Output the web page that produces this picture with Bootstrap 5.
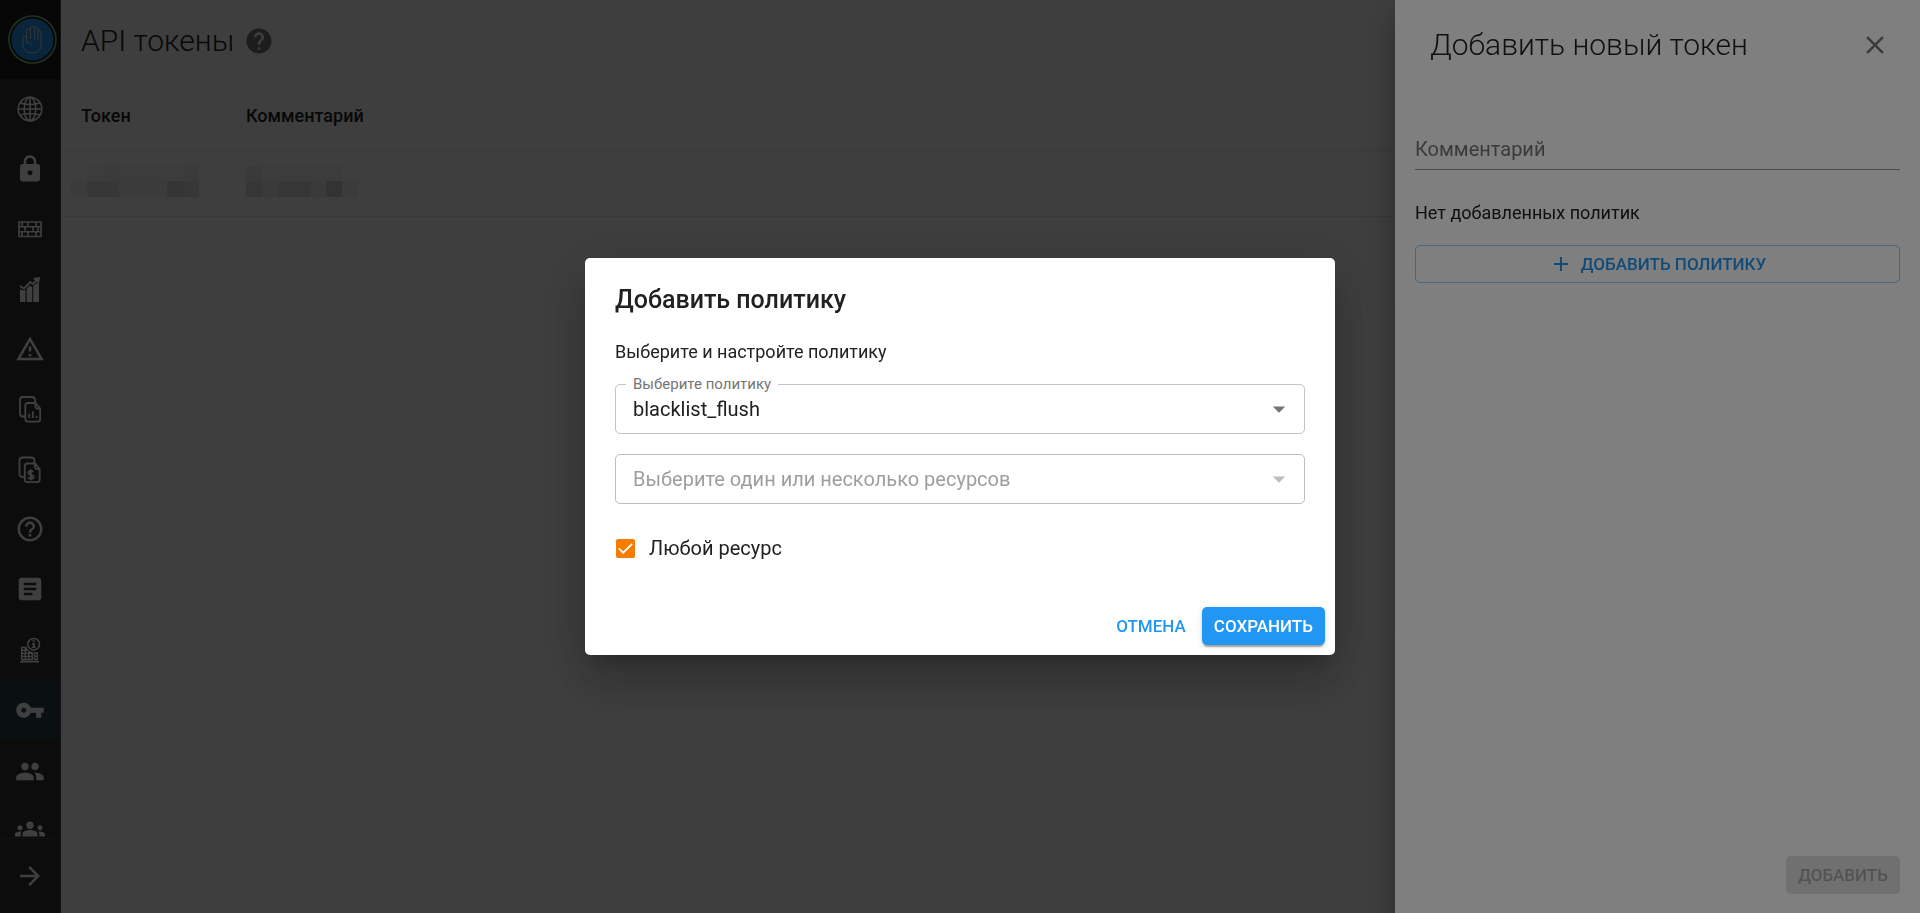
<!DOCTYPE html>
<html lang="ru">
<head>
<meta charset="utf-8">
<meta name="viewport" content="width=device-width, initial-scale=1">
<title>API токены</title>
<link href="https://cdn.jsdelivr.net/npm/bootstrap@5.3.0/dist/css/bootstrap.min.css" rel="stylesheet">
<style>
  body { font-family: Roboto, "Noto Sans", sans-serif; font-size: 18px; line-height: 26px; color: #212121; background: #fafafa; }
  svg { display: block; flex: none; }

  /* Sidebar */
  .side { width: 61px; background: #303030; border-right: 1px solid #4a4a4a; color: #fff; }
  .side-logo { height: 79px; background: #1a1a1a; padding: 15px 0 0 8px; }
  .side-scroll { min-height: 0; }
  .side-link { height: 60px; color: #fff; flex: none; }
  .side-link.active { background: #2b3f48; }
  .side-foot { height: 75px; border-top: 1px solid #4a4a4a; }
  .ic { width: 30px; height: 30px; fill: currentColor; }
  .ln { fill: none; stroke: currentColor; }

  /* Page */
  .page-head { height: 82px; padding-left: 20px; gap: 10px; }
  .title-light { font-size: 30px; line-height: 40px; font-weight: 300; margin: 0; }
  .help-btn { color: #757575; }
  .tokens { color: inherit; margin: 0; --bs-table-bg: transparent; }
  .tokens th { height: 68px; padding: 0 20px; font-weight: 500; vertical-align: middle; border-bottom: 1px solid #e0e0e0; }
  .tokens td { height: 66px; padding: 14px 20px 0; vertical-align: top; border-bottom: 1px solid #e0e0e0; }
  .tokens td:first-child { padding-left: 10px; }
  .col-token { width: 165px; }

  /* Drawer */
  .drawer.offcanvas { --bs-offcanvas-width: 525px; border: 0; background: #fff; color: #212121;
    box-shadow: 0 10px 12px -6px rgba(0,0,0,.2), 0 20px 30px 2px rgba(0,0,0,.14), 0 8px 38px 6px rgba(0,0,0,.12); }
  .drawer-head { padding: 25px 30px 0 35px; }
  .drawer-body { padding: 70px 20px 0; }
  .drawer-foot { padding: 0 20px 19px; }
  .drawer-note { margin: 30px 0 19px; }
  .line-input { font-size: 20px; line-height: 28px; padding: 0 0 6px; border: 0; border-bottom: 1px solid #949494; border-radius: 0; background: none; }
  .line-input::placeholder { color: #757575; opacity: 1; }
  .icon-btn { color: #757575; }

  /* Buttons */
  .mbtn { font-size: 17px; line-height: 24px; font-weight: 500; height: 38px; padding: 6px 12px; border-radius: 5px; }
  .mbtn-outline { color: #2196f3; border: 1px solid #90caf9; gap: 8px; }
  .mbtn-text { color: #2196f3; border: 0; }
  .mbtn-fill, .mbtn-fill:hover { color: #fff; background: #2196f3; border: 0;
    box-shadow: 0 4px 1px -2px rgba(0,0,0,.2), 0 2px 2px 0 rgba(0,0,0,.14), 0 1px 6px 0 rgba(0,0,0,.12); }
  .mbtn-off.btn:disabled { color: #a6a6a6; background: #e0e0e0; border: 0; opacity: 1; }

  /* Dialog */
  .policy { max-width: 750px; }
  .policy .modal-content { border: 0; border-radius: 5px; color: #212121;
    box-shadow: 0 14px 19px -9px rgba(0,0,0,.2), 0 30px 48px 4px rgba(0,0,0,.14), 0 11px 58px 10px rgba(0,0,0,.12); }
  .policy .modal-header { padding: 22px 30px 14px; border: 0; }
  .policy .modal-title { font-size: 25px; line-height: 40px; font-weight: 500; }
  .policy .modal-body { padding: 5px 30px 35px; }
  .policy .modal-body p { margin: 0 0 19px; }
  .policy .modal-footer { padding: 10px; border: 0; gap: 4px; }
  .policy .modal-footer > * { margin: 0; }
  .pick { position: relative; margin-bottom: 20px; }
  .pick label { position: absolute; left: 11px; top: -10px; padding: 0 7px; background: #fff; color: #757575; font-size: 15px; line-height: 20px; }
  .pick .form-select { height: 50px; font-size: 20px; line-height: 28px; padding: 10px 50px 10px 17px; border: 1px solid #c4c4c4; border-radius: 5px; color: #212121; background-color: #fff; background-size: 30px 30px; background-position: right 10px center;
    background-image: url("data:image/svg+xml,%3csvg xmlns='http://www.w3.org/2000/svg' viewBox='0 0 24 24'%3e%3cpath fill='%23757575' d='M7 10l5 5 5-5z'/%3e%3c/svg%3e"); }
  .pick .form-select:disabled { color: #9e9e9e; opacity: 1; border-color: #bdbdbd;
    background-image: url("data:image/svg+xml,%3csvg xmlns='http://www.w3.org/2000/svg' viewBox='0 0 24 24'%3e%3cpath fill='%23bdbdbd' d='M7 10l5 5 5-5z'/%3e%3c/svg%3e"); }
  .anyres { margin: 30px 0 0; min-height: 28px; padding: 0; gap: 14px; font-size: 20px; line-height: 28px; }
  .anyres .form-check-input { float: none; margin: 0 0 0 1px; width: 19px; height: 19px; border-radius: 2px; border: 0; }
  .anyres .form-check-input:checked { background-color: #f57c00; background-size: 19px 19px;
    background-image: url("data:image/svg+xml,%3csvg xmlns='http://www.w3.org/2000/svg' viewBox='0 0 19 19'%3e%3cpath fill='none' stroke='%23fff' stroke-width='1.8' d='M2.8 9.4l4.4 4.3 8.9-8.9'/%3e%3c/svg%3e"); }
</style>
</head>
<body class="d-flex vh-100 overflow-hidden">

<nav class="side d-flex flex-column flex-shrink-0" aria-label="Меню">
  <div class="side-logo flex-shrink-0">
    <svg width="49" height="49" viewBox="0 0 49 49" fill="none">
      <circle cx="24.5" cy="24.5" r="23.5" stroke="#81c784" stroke-width="1.6"/>
      <circle cx="24.5" cy="24.5" r="21" fill="#2196f3"/>
      <path stroke="#cfd8dc" stroke-width="1" d="M18.500 27V15.500q0-2 2-2t2 2V24M22.500 22V13q0-2 2-2t2 2V24M26.500 14q0-2 1.500-2t2 2V25M30 17q0-1.500 1.500-1.500T33 17V29q0 9-9 9t-9-9V23q0-2 1.500-2t2 2V27q4 0 5.500 3"/>
    </svg>
  </div>
  <div class="side-scroll d-flex flex-column flex-fill overflow-hidden">
    <a href="#" class="side-link d-flex align-items-center justify-content-center" aria-label="Сеть">
      <svg class="ic ln" viewBox="0 0 30 30" stroke-width="1.6"><circle cx="15" cy="15" r="11.800"/><ellipse cx="15" cy="15" rx="5.800" ry="11.800"/><path d="M15 3v24M3 15h24M5 9q10 3 20 0M5 21q10-3 20 0"/></svg>
    </a>
    <a href="#" class="side-link d-flex align-items-center justify-content-center" aria-label="Доступ">
      <svg class="ic" viewBox="0 0 24 24"><path d="M18 8h-1V6c0-2.760-2.240-5-5-5S7 3.240 7 6v2H6c-1.100 0-2 .9-2 2v10c0 1.100.9 2 2 2h12c1.100 0 2-.9 2-2V10c0-1.100-.9-2-2-2zm-6 9c-1.100 0-2-.9-2-2s.9-2 2-2 2 .9 2 2-.9 2-2 2zm3.100-9H8.900V6c0-1.710 1.390-3.100 3.100-3.100s3.100 1.390 3.100 3.100v2z"/></svg>
    </a>
    <a href="#" class="side-link d-flex align-items-center justify-content-center" aria-label="Файрвол">
      <svg class="ic ln" viewBox="0 0 30 30" stroke-width="1.600"><path d="M4 8h22v14.500H4zM4 12.800h22M4 17.700h22M7 8v5M13 8v5M21 8v5M10 13v5M18 13v5M23 13v5M7 18v4M13 18v4M21 18v4"/></svg>
    </a>
    <a href="#" class="side-link d-flex align-items-center justify-content-center" aria-label="Аналитика">
      <svg class="ic" viewBox="0 0 30 30"><path d="M5 15l2.500 1.500 3-.500V28H5zM11.700 14.500l3-3 2.500 1.500V28h-5.500zM18.300 12l3-3 2.700 1v18h-5.700zM17.700 4l7.300-1-1 7z"/><path class="ln" stroke-width="1.800" d="M5 12l4 2.500 6.300-6.500 2.500 2L23 5"/></svg>
    </a>
    <a href="#" class="side-link d-flex align-items-center justify-content-center" aria-label="Предупреждения">
      <svg class="ic" viewBox="0 0 24 24"><path d="M12 5.990L19.530 19H4.470L12 5.990M12 2L1 21h22L12 2zm1 14h-2v2h2v-2zm0-6h-2v4h2v-4z"/></svg>
    </a>
    <a href="#" class="side-link d-flex align-items-center justify-content-center" aria-label="Отчёты">
      <svg class="ic ln" viewBox="0 0 30 30" stroke-width="1.800"><path d="M10 22.500H8q-3 0-3-3V6q0-3 3-3h9q3 0 3 3v2.500M13 9h7.500l4.700 5.500V25q0 2.700-2.700 2.700H13q-2.700 0-2.700-2.700V11.700Q10.300 9 13 9zM20.300 9v3q0 2.500 2.500 2.500h2.500M14.200 20v4M17.800 17.300V24M21.600 21.800V24"/></svg>
    </a>
    <a href="#" class="side-link d-flex align-items-center justify-content-center" aria-label="Счета">
      <svg class="ic ln" viewBox="0 0 30 30" stroke-width="1.800"><path d="M10 23H8q-3.500 0-3.500-3V6.500q0-3 3-3h9q3 0 3 3V9M12.500 9.500H20l4.700 5.500v10.500q0 2.700-2.700 2.700h-9.500q-2.700 0-2.700-2.700V12.200q0-2.700 2.700-2.700zM19.800 9.500v3q0 2.500 2.500 2.500h2.500M18.300 18.300q-.5-1.300-2.500-1.300-2.300 0-2.300 1.900 0 1.500 2.400 1.900 2.700.5 2.700 2.200 0 1.900-2.600 1.900-2.300 0-2.800-1.600M15.900 15.300v11"/></svg>
    </a>
    <a href="#" class="side-link d-flex align-items-center justify-content-center" aria-label="Помощь">
      <svg class="ic" viewBox="0 0 24 24"><path d="M11 18h2v-2h-2v2zm1-16C6.480 2 2 6.480 2 12s4.480 10 10 10 10-4.480 10-10S17.520 2 12 2zm0 18c-4.410 0-8-3.590-8-8s3.590-8 8-8 8 3.590 8 8-3.590 8-8 8zm0-14c-2.210 0-4 1.790-4 4h2c0-1.100.9-2 2-2s2 .9 2 2c0 2-3 1.750-3 5h2c0-2.250 3-2.500 3-5 0-2.210-1.790-4-4-4z"/></svg>
    </a>
    <a href="#" class="side-link d-flex align-items-center justify-content-center" aria-label="Журнал">
      <svg class="ic" viewBox="0 0 24 24"><path d="M19 3H5c-1.100 0-2 .9-2 2v14c0 1.100.9 2 2 2h14c1.100 0 2-.9 2-2V5c0-1.100-.9-2-2-2zm-5 14H7v-2h7v2zm3-4H7v-2h10v2zm0-4H7V7h10v2z"/></svg>
    </a>
    <a href="#" class="side-link d-flex align-items-center justify-content-center" aria-label="Организация">
      <svg class="ic" viewBox="0 0 30 30"><path fill-rule="evenodd" d="M5 27h19v1.400H5zM6 12.700h5.500q1 5 6.800 5.500v8.300H6zM7.500 14v1.500h2V14zM7.500 17v1.700h2V17zM11 17v1.700h2V17zM7.500 20v1.700h2V20zM11 20v1.700h2V20zM14.500 20v1.700h2V20zM7.500 23v1.700h2V23zM11 23v1.700h2V23zM14.500 23v1.700h2V23zM19.200 18.300H23v8.200h-3.800zM20.300 20v1.500h1.600V20zM20.300 23v1.500h1.600V23z"/><path d="M17.600 6.300h2.200V8h-2.200zM17 9h2.800v3.800h.9V14h-3.900v-1.200h1v-2.600H17z"/><circle class="ln" cx="18.700" cy="10.200" r="5.800" stroke-width="1.500"/></svg>
    </a>
    <a href="#" class="side-link active d-flex align-items-center justify-content-center" aria-label="API токены" aria-current="page">
      <svg class="ic" viewBox="0 -1 24 24"><path d="M12.650 10C11.830 7.670 9.610 6 7 6c-3.310 0-6 2.690-6 6s2.690 6 6 6c2.610 0 4.830-1.670 5.650-4H17v4h4v-4h2v-4H12.650zM7 14c-1.100 0-2-.9-2-2s.9-2 2-2 2 .9 2 2-.9 2-2 2z"/></svg>
    </a>
    <a href="#" class="side-link d-flex align-items-center justify-content-center" aria-label="Пользователи">
      <svg class="ic" viewBox="0 -2 24 24"><path d="M16 11c1.660 0 2.990-1.340 2.990-3S17.660 5 16 5c-1.660 0-3 1.340-3 3s1.340 3 3 3zm-8 0c1.660 0 2.990-1.340 2.990-3S9.660 5 8 5C6.340 5 5 6.340 5 8s1.340 3 3 3zm0 2c-2.330 0-7 1.170-7 3.500V19h14v-2.500c0-2.330-4.670-3.500-7-3.500zm8 0c-.29 0-.62.02-.97.05 1.160.84 1.970 1.970 1.970 3.450V19h6v-2.500c0-2.330-4.670-3.500-7-3.500z"/></svg>
    </a>
    <a href="#" class="side-link d-flex align-items-center justify-content-center" aria-label="Группы">
      <svg class="ic" viewBox="0 0 24 24"><path d="M12 12.750c1.630 0 3.070.39 4.240.9 1.080.48 1.760 1.560 1.760 2.730V18H6v-1.610c0-1.180.68-2.260 1.760-2.730 1.170-.52 2.610-.91 4.240-.91zM4 13c1.100 0 2-.9 2-2s-.9-2-2-2-2 .9-2 2 .9 2 2 2zm1.130 1.100c-.37-.06-.74-.1-1.130-.1-.99 0-1.930.21-2.780.58C.48 14.900 0 15.620 0 16.430V18h4.500v-1.610c0-.83.23-1.610.63-2.290zM20 13c1.100 0 2-.9 2-2s-.9-2-2-2-2 .9-2 2 .9 2 2 2zm4 3.430c0-.81-.48-1.530-1.220-1.850-.85-.37-1.790-.58-2.780-.58-.39 0-.76.04-1.130.1.4.68.63 1.460.63 2.290V18H24v-1.570zM12 6c1.660 0 3 1.340 3 3s-1.340 3-3 3-3-1.340-3-3 1.340-3 3-3z"/></svg>
    </a>
  </div>
  <button type="button" class="side-foot flex-shrink-0 btn rounded-0 border-start-0 border-end-0 border-bottom-0 p-0 text-white d-flex align-items-center justify-content-center" aria-label="Развернуть">
    <svg class="ic" viewBox="0 0 24 24"><path d="M12 4l-1.410 1.410L16.170 11H4v2h12.170l-5.580 5.590L12 20l8-8z"/></svg>
  </button>
</nav>

<main class="flex-fill">
  <header class="page-head d-flex align-items-center">
    <h1 class="title-light">API токены</h1>
    <button type="button" class="btn p-0 border-0 help-btn" aria-label="Справка">
      <svg class="ic" viewBox="0 0 24 24"><path d="M12 2C6.480 2 2 6.480 2 12s4.480 10 10 10 10-4.480 10-10S17.520 2 12 2zm1 17h-2v-2h2v2zm2.070-7.750l-.9.920C13.450 12.900 13 13.500 13 15h-2v-.5c0-1.100.45-2.100 1.170-2.830l1.240-1.260c.37-.36.59-.86.59-1.410 0-1.100-.9-2-2-2s-2 .9-2 2H8c0-2.210 1.790-4 4-4s4 1.790 4 4c0 .88-.36 1.680-.93 2.250z"/></svg>
    </button>
  </header>
  <table class="table tokens">
    <thead><tr><th class="col-token" scope="col">Токен</th><th scope="col">Комментарий</th></tr></thead>
    <tbody><tr>
      <td>
        <svg width="128" height="32" viewBox="0 0 8 2" shape-rendering="crispEdges" role="img" aria-label="Скрыто">
          <path fill="#f2f2f2" d="M1 0h7v1H1z"/><path fill="#ececec" d="M2 0h1v1H2zM7 0h1v1H7zM0 1h1v1H0zM3 1h3v1H3z"/><path fill="#dcdcdc" d="M1 1h2v1H1zM7 1h1v1H7z"/><path fill="#d6d6d6" d="M6 1h1v1H6z"/>
        </svg>
      </td>
      <td>
        <svg width="112" height="32" viewBox="0 0 7 2" shape-rendering="crispEdges" role="img" aria-label="Скрыто">
          <path fill="#f2f2f2" d="M1 0h5v1H1z"/><path fill="#f8f8f8" d="M6 0h1v1H6z"/><path fill="#e8e8e8" d="M0 0h1v1H0zM1 1h1v1H1zM4 1h1v1H4z"/><path fill="#ececec" d="M6 1h1v1H6z"/><path fill="#d9d9d9" d="M0 1h1v1H0zM2 1h2v1H2z"/><path fill="#cecece" d="M5 1h1v1H5z"/>
        </svg>
      </td>
    </tr></tbody>
  </table>
</main>

<div class="offcanvas-backdrop show"></div>
<aside class="drawer offcanvas offcanvas-end show" data-bs-backdrop="false" data-bs-scroll="true" aria-labelledby="drawerTitle">
  <div class="drawer-head d-flex align-items-center justify-content-between">
    <h2 class="title-light" id="drawerTitle">Добавить новый токен</h2>
    <button type="button" class="btn p-0 border-0 icon-btn" aria-label="Закрыть">
      <svg class="ic" viewBox="0 0 24 24"><path d="M19 6.410L17.590 5 12 10.590 6.410 5 5 6.410 10.590 12 5 17.590 6.410 19 12 13.410 17.590 19 19 17.590 13.410 12z"/></svg>
    </button>
  </div>
  <div class="drawer-body flex-fill">
    <input type="text" class="form-control line-input shadow-none" placeholder="Комментарий" aria-label="Комментарий">
    <p class="drawer-note">Нет добавленных политик</p>
    <button type="button" class="btn mbtn mbtn-outline w-100 d-flex align-items-center justify-content-center">
      <svg width="24" height="24" viewBox="0 0 24 24" fill="currentColor"><path d="M19 13h-6v6h-2v-6H5v-2h6V5h2v6h6v2z"/></svg>
      ДОБАВИТЬ ПОЛИТИКУ
    </button>
  </div>
  <div class="drawer-foot d-flex justify-content-end">
    <button type="button" class="btn mbtn mbtn-off" disabled>ДОБАВИТЬ</button>
  </div>
</aside>

<div class="modal-backdrop show"></div>
<div class="modal show d-block" tabindex="-1" role="dialog" aria-modal="true" aria-labelledby="policyTitle">
  <div class="modal-dialog modal-dialog-centered policy">
    <form class="modal-content">
      <div class="modal-header"><h2 class="modal-title" id="policyTitle">Добавить политику</h2></div>
      <div class="modal-body">
        <p>Выберите и настройте политику</p>
        <div class="pick">
          <select class="form-select" id="policySelect"><option>blacklist_flush</option></select>
          <label for="policySelect">Выберите политику</label>
        </div>
        <div class="pick">
          <select class="form-select" aria-label="Ресурсы" disabled><option>Выберите один или несколько ресурсов</option></select>
        </div>
        <div class="form-check anyres d-flex align-items-center">
          <input class="form-check-input" type="checkbox" id="anyResource" checked>
          <label class="form-check-label" for="anyResource">Любой ресурс</label>
        </div>
      </div>
      <div class="modal-footer">
        <button type="button" class="btn mbtn mbtn-text">ОТМЕНА</button>
        <button type="submit" class="btn mbtn mbtn-fill">СОХРАНИТЬ</button>
      </div>
    </form>
  </div>
</div>

<script src="https://cdn.jsdelivr.net/npm/bootstrap@5.3.0/dist/js/bootstrap.bundle.min.js"></script>
</body>
</html>
